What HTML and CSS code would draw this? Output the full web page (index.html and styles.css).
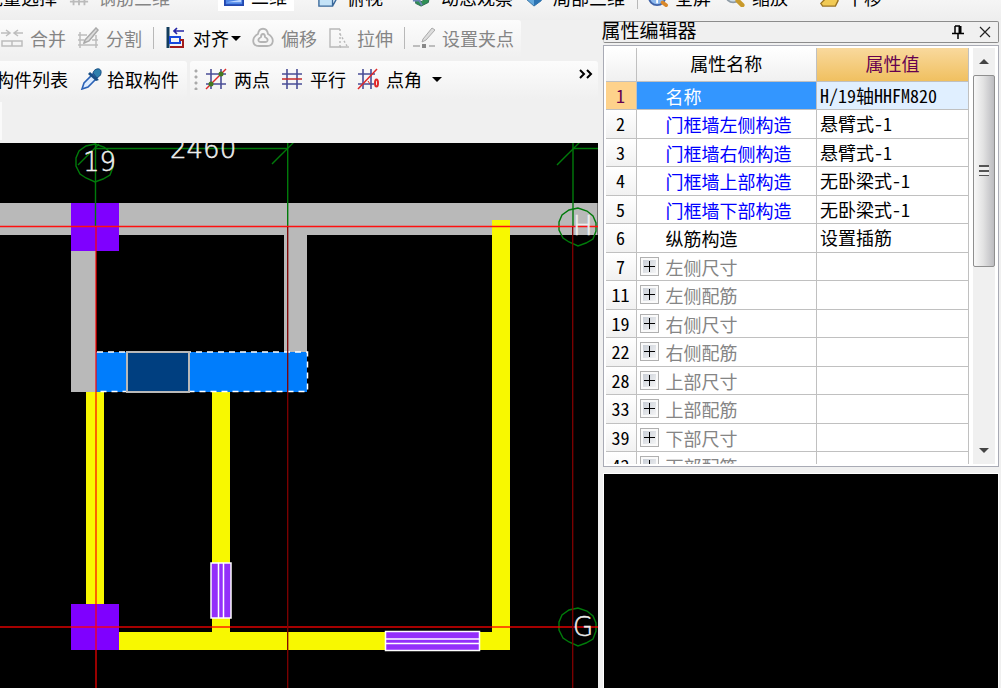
FILE: index.html
```html
<!DOCTYPE html>
<html lang="zh-CN">
<head>
<meta charset="utf-8">
<title>属性编辑器</title>
<link rel="stylesheet" href="styles.css">
</head>
<body>
<div class="app">
  <header class="view-bar" role="toolbar" aria-label="视图">
    <button class="tool cut-left">批量选择</button>
    <button class="tool off"><svg class="icon" viewBox="0 0 22 22"><path d="M1 4h20M1 10h20M1 16h20M5 2v18M11 2v18M17 2v18" stroke="#bbb" stroke-width="2" fill="none"/></svg>钢筋三维</button>
    <button class="tool chosen"><svg class="icon" viewBox="0 0 22 22"><rect x="1" y="1" width="20" height="20" fill="#4f86e6" stroke="#2348b0" stroke-width="2"/><path d="M3 18h16v-3z" fill="#b9d4ff"/></svg>二维</button>
    <button class="tool"><svg class="icon" viewBox="0 0 22 22"><path d="M1 10h15v11H1zM1 10l6-8h14l-5 8M16 21l5-9V2" fill="#c4e3f8" stroke="#39689a" stroke-width="1.5"/></svg>俯视</button>
    <button class="tool"><svg class="icon" viewBox="0 0 22 22"><path d="M4 14l7 2 9-10-2 11-8 4-6-3z" fill="#2f9155" stroke="#24634b"/><path d="M1 15h7l3 5" stroke="#6b83b5" stroke-width="2" fill="none"/></svg>动态观察</button>
    <button class="tool local"><svg class="icon" viewBox="0 0 22 22"><path d="M2 13l9 8 8-6 1-9-9 4-9-4z" fill="#63a8dc" stroke="#2f6c9e"/><path d="M11 10v11l8-6 1-9z" fill="#2c74b3"/></svg>局部三维</button>
    <span class="divider"></span>
    <button class="tool near">
      <svg class="icon" viewBox="0 0 22 22"><circle cx="10" cy="11" r="9" fill="#8db9ee" stroke="#3f62a8" stroke-width="2"/><path d="M10 8v10M5 13h10" stroke="#fff" stroke-width="2"/><path d="M16 17l4 3" stroke="#d9882b" stroke-width="4" stroke-linecap="round"/></svg>全屏</button>
    <button class="tool near zoom"><svg class="icon" viewBox="0 0 22 22"><circle cx="9" cy="9" r="8" fill="#cfdde6" stroke="#8e9ba5" stroke-width="2"/><path d="M14 15l5 5" stroke="#c99a2c" stroke-width="5" stroke-linecap="round"/></svg>缩放</button>
    <button class="tool near"><svg class="icon" viewBox="0 0 22 22"><path d="M2 18l5-5V4l4-2 6 4 4 9-3 6H4z" fill="#f1ca55" stroke="#9b7322" stroke-width="1.5"/></svg>平移</button>
  </header>

  <main class="work">
    <section class="left">
      <div class="bars">
        <div class="bar edit-bar" role="toolbar" aria-label="修改">
          <button class="tool off"><svg class="icon" viewBox="0 0 22 22" fill="none" stroke="#bdbdbd" stroke-width="1.5"><path d="M0 6h8M5 3l4 3-4 3M22 6h-8M17 3l-4 3 4 3M1 14h20v5H1zM11 14v5"/></svg>合并</button>
          <button class="tool off"><svg class="icon" viewBox="0 0 22 22" fill="none" stroke="#bdbdbd" stroke-width="1.5"><path d="M1 8h9M1 18h20M3 5v16M19 8v13M1 13h6M15 13h6M7 16l2-1"/><path d="M8 13L19 1l2 2-9 11-5 2z" fill="#ddd" stroke="#aaa"/></svg>分割</button>
          <span class="divider"></span>
          <button class="tool align"><svg class="icon" viewBox="0 0 22 22" fill="none"><path d="M3 0v21" stroke="#123c5c" stroke-width="3"/><path d="M9 4h10M12 1L9 4l3 3" stroke="#2525a5" stroke-width="1.7"/><path d="M5 10h10v6H5z" stroke="#1748dd" stroke-width="2"/><path d="M5 20h13v-7h-3" stroke="#a11b1b" stroke-width="2"/></svg>对齐<i class="caret"></i></button>
          <button class="tool off"><svg class="icon" viewBox="0 0 22 22" fill="none" stroke="#b4b4b4" stroke-width="1.8"><path d="M6 7C7 0 15 0 16 7c7 4 6 12-1 12H7C0 19-1 11 6 7z"/><path d="M9 10c0-4 4-4 4 0 4 2 3 5 0 5H9c-3 0-4-3 0-5z"/></svg>偏移</button>
          <button class="tool off"><svg class="icon" viewBox="0 0 22 22" fill="none" stroke="#b8b8b8" stroke-width="1.4"><path d="M12 2H2v18h11"/><path d="M12 2v18M12 7l7 12" stroke-dasharray="2 2"/><path d="M12 20h9"/></svg>拉伸</button>
          <span class="divider"></span>
          <button class="tool off snap"><svg class="icon" viewBox="0 0 22 22" fill="none"><path d="M0 19h7M16 19h6" stroke="#aaa" stroke-width="1.5"/><path d="M9 17h4v4H9z" fill="#888"/><path d="M10 12L19 1l3 2-9 10-4 2z" fill="#ddd" stroke="#aaa"/></svg>设置夹点</button>
        </div>
        <div class="bar-row">
          <div class="bar part-bar" role="toolbar" aria-label="构件">
            <button class="tool">构件列表</button>
            <button class="tool"><svg class="icon" viewBox="0 0 22 22"><path d="M2 21l2-6 9-9 4 4-9 9z" fill="#dcecff" stroke="#2b62b6" stroke-width="1.6"/><path d="M10 4l9 8-3 1-8-7z" fill="#174e83"/><path d="M13 5c1-5 9-6 8 0 0 3-3 4-4 5z" fill="#2e80ad" stroke="#174e83"/></svg>拾取构件</button>
          </div>
          <div class="bar point-bar" role="toolbar" aria-label="辅轴">
            <span class="grip"></span>
            <button class="tool"><svg class="icon" viewBox="0 0 22 22" fill="none"><path d="M6 1v20M16 1v20M1 6h20M1 16h20" stroke="#4a4e96" stroke-width="1.6"/><path d="M1 21L21 1" stroke="#e02828" stroke-width="1.5"/><circle cx="16" cy="6" r="2.5" fill="#45791f"/><circle cx="6" cy="16" r="2.5" fill="#45791f"/></svg>两点</button>
            <button class="tool"><svg class="icon" viewBox="0 0 22 22" fill="none"><path d="M6 1v20M16 1v20M1 6h20M1 16h20" stroke="#4a4e96" stroke-width="1.6"/><path d="M1 11h20" stroke="#c42a2a" stroke-width="1.5"/></svg>平行</button>
            <button class="tool"><svg class="icon" viewBox="0 0 22 22" fill="none"><path d="M6 1v20M14 1v20M1 6h17M1 16h16" stroke="#4a4e96" stroke-width="1.6"/><path d="M1 21L20 1" stroke="#e02828" stroke-width="1.5"/><ellipse cx="19.500" cy="15" rx="1.500" ry="3.500" stroke="#e02828" stroke-width="2"/><path d="M11 13l2 3" stroke="#e02828"/></svg>点角<i class="caret far"></i></button>
            <button class="more" aria-label="更多"><svg width="14" height="10" viewBox="0 0 14 10" fill="none" stroke="#000" stroke-width="2"><path d="M1 1l4 4-4 4M8 1l4 4-4 4"/></svg></button>
          </div>
        </div>
        <div class="stub"></div>
      </div>

      <svg class="drawing" role="img" aria-label="平面图">
        <g transform="translate(0 -143)">
          <g fill="#b9b9b9">
            <rect x="0" y="203" width="100%" height="32"/>
            <rect x="71" y="251" width="25" height="141"/>
            <rect x="284" y="235" width="23" height="117"/>
          </g>
          <g fill="#f8f800">
            <rect x="86" y="392" width="18" height="212"/>
            <rect x="212" y="392" width="18" height="242"/>
            <rect x="119" y="632" width="391" height="18"/>
            <rect x="492" y="220" width="18" height="430"/>
          </g>
          <g fill="#7f00ff">
            <rect x="71" y="203" width="48" height="48"/>
            <rect x="71" y="604" width="48" height="46"/>
          </g>
          <rect x="96" y="352" width="211" height="40" fill="#007dfc"/>
          <path d="M97 352h210.500v39.500H97" fill="none" stroke="#fff" stroke-width="1.500" stroke-dasharray="6 5"/>
          <rect x="127" y="352" width="62" height="40" fill="#003f80" stroke="#b9b9b9" stroke-width="2"/>
          <g fill="#932ffa" stroke="#fff" stroke-width="1.500">
            <rect x="211" y="563" width="20" height="55"/>
            <path d="M218.500 563v55M223.500 563v55"/>
            <rect x="385.500" y="631.500" width="94" height="19"/>
            <path d="M385 639h95M385 643.500h95"/>
          </g>
          <g fill="none" stroke="#007a0a" stroke-width="1.400">
            <path d="M95.500 143v84M287.700 143v84M573 143v84M96 148.500h192M573 148.500h400"/>
            <path d="M78 165l21-21M272 164l22-22M557 165l23-23"/>
            <path id="bubble" d="M95 144l-9 2-7 5-3 7v8l4 8 6 4 9 4 8-3 7-4 3-8v-8l-3-7-6-5z"/>
            <use href="#bubble" x="483" y="64"/>
            <use href="#bubble" x="483" y="464"/>
          </g>
          <g fill="none">
            <path d="M0 226.500h2000" stroke="#ff1010" stroke-width="1.500"/>
            <path d="M0 627h2000" stroke="#ff0000" stroke-opacity=".65" stroke-width="2"/>
            <path d="M96 227v2000" stroke="#ff0000" stroke-opacity=".8" stroke-width="1.500"/>
            <path d="M287.700 227v2000M572.700 227v2000" stroke="#800000" stroke-width="1.300"/>
          </g>
          <g class="labels">
            <text x="170" y="158">2460</text>
            <text x="83" y="171">19</text>
            <text x="573" y="235">H</text>
            <text x="573" y="636">G</text>
          </g>
        </g>
      </svg>
    </section>

    <aside class="right">
      <section class="panel">
        <div class="title">
          <h1>属性编辑器</h1>
          <button aria-label="固定"><svg width="12" height="14" viewBox="0 0 12 14" fill="none" stroke="#000"><path d="M3 1v7M3 1h5M0 8.500h12M6 9v5" stroke-width="1.500"/><path d="M8 1v7" stroke-width="3"/></svg></button>
          <button aria-label="关闭"><svg width="12" height="12" viewBox="0 0 12 12" stroke="#222" stroke-width="1.200"><path d="M1 1l10 10M11 1L1 11"/></svg></button>
        </div>
        <div class="frame">
          <div class="rows">
            <table>
              <colgroup><col class="c-num"><col class="c-name"><col class="c-value"></colgroup>
              <thead><tr><th></th><th scope="col">属性名称</th><th scope="col" class="hot">属性值</th></tr></thead>
              <tbody>
                <tr class="current"><th scope="row">1</th><td>名称</td><td>H/19轴HHFM820</td></tr>
                <tr class="key"><th scope="row">2</th><td>门框墙左侧构造</td><td>悬臂式-1</td></tr>
                <tr class="key"><th scope="row">3</th><td>门框墙右侧构造</td><td>悬臂式-1</td></tr>
                <tr class="key"><th scope="row">4</th><td>门框墙上部构造</td><td>无卧梁式-1</td></tr>
                <tr class="key"><th scope="row">5</th><td>门框墙下部构造</td><td>无卧梁式-1</td></tr>
                <tr><th scope="row">6</th><td>纵筋构造</td><td>设置插筋</td></tr>
                <tr class="group"><th scope="row">7</th><td><button class="plus" aria-label="展开左侧尺寸"></button>左侧尺寸</td><td></td></tr>
                <tr class="group"><th scope="row">11</th><td><button class="plus" aria-label="展开左侧配筋"></button>左侧配筋</td><td></td></tr>
                <tr class="group"><th scope="row">19</th><td><button class="plus" aria-label="展开右侧尺寸"></button>右侧尺寸</td><td></td></tr>
                <tr class="group"><th scope="row">22</th><td><button class="plus" aria-label="展开右侧配筋"></button>右侧配筋</td><td></td></tr>
                <tr class="group"><th scope="row">28</th><td><button class="plus" aria-label="展开上部尺寸"></button>上部尺寸</td><td></td></tr>
                <tr class="group"><th scope="row">33</th><td><button class="plus" aria-label="展开上部配筋"></button>上部配筋</td><td></td></tr>
                <tr class="group"><th scope="row">39</th><td><button class="plus" aria-label="展开下部尺寸"></button>下部尺寸</td><td></td></tr>
                <tr class="group"><th scope="row">42</th><td><button class="plus" aria-label="展开下部配筋"></button>下部配筋</td><td></td></tr>
              </tbody>
            </table>
          </div>
          <div class="scroll">
            <button class="up" aria-label="向上滚动"></button>
            <div class="track"><div class="thumb"><i></i></div></div>
            <button class="down" aria-label="向下滚动"></button>
          </div>
        </div>
      </section>
      <div class="preview"></div>
    </aside>
  </main>
</div>
</body>
</html>
```

FILE: styles.css
```css
* { box-sizing: border-box; }
body {
  margin: 0;
  background: #f0f0f0;
  color: #000;
  font: 18px/24px "Noto Sans CJK SC", sans-serif;
}
button {
  margin: 0;
  padding: 0;
  border: 0;
  background: none;
  color: inherit;
  font: inherit;
}
.app {
  display: flex;
  flex-direction: column;
  height: 100vh;
  overflow: hidden;
}

/* toolbars */
.tool {
  display: flex;
  flex: none;
  align-items: center;
  gap: 7px;
  white-space: nowrap;
}
.off { color: #858585; }
.icon {
  display: block;
  flex: none;
  width: 22px;
  height: 22px;
}
.caret {
  margin-left: -4px;
  border: 5px solid transparent;
  border-top-color: #000;
  border-bottom: 0;
}
.caret.far { margin-left: 3px; }
.divider {
  flex: none;
  width: 1px;
  height: 22px;
  background: #b8b8b8;
}
.view-bar {
  display: flex;
  flex: none;
  align-items: flex-end;
  gap: 28px;
  height: 20px;
  padding-bottom: 11px;
  overflow: hidden;
  background: linear-gradient(#f5f5f5, #eee);
}
.view-bar .tool {
  gap: 8px;
  height: 24px;
}
.view-bar .icon { height: 20px; }
.view-bar .cut-left {
  margin-left: -15px;
  margin-right: -17px;
}
.view-bar .chosen {
  gap: 6px;
  height: 26px;
  margin: 0 -5px -2px 20px;
  padding: 0 7px 4px 5px;
  background: #fff;
}
.view-bar .local { margin-left: -18px; }
.view-bar .divider { margin: 0 -19px 0 -16px; }
.view-bar .near { gap: 6px; }
.view-bar .zoom { margin: 0 2px 0 -15px; }

.work {
  display: grid;
  flex: 1;
  grid-template-columns: minmax(0, 3fr) minmax(0, 2fr);
  gap: 5px;
  min-height: 0;
}
.left {
  display: flex;
  flex-direction: column;
  min-width: 0;
  min-height: 0;
}
.bars {
  display: flex;
  flex: none;
  flex-direction: column;
  gap: 3px;
  padding-bottom: 3px;
}
.bar {
  display: flex;
  align-items: center;
  height: 38px;
  padding-bottom: 2px;
  border-radius: 0 3px 3px 0;
  background: linear-gradient(#fcfcfc, #f0f0f0);
}
.edit-bar {
  gap: 11px;
  align-self: flex-start;
  padding-right: 7px;
  padding-left: 1px;
}
.edit-bar .align { gap: 6px; }
.edit-bar .snap { margin-left: -3px; }
.bar-row {
  display: flex;
  gap: 3px;
}
.part-bar {
  gap: 12px;
  margin-left: -4px;
  padding-right: 8px;
}
.part-bar .tool { gap: 5px; }
.point-bar {
  flex: 1;
  gap: 11px;
  padding-right: 5px;
  padding-left: 4px;
  border-radius: 3px;
}
.grip {
  width: 4px;
  height: 22px;
  margin-right: -4px;
  background: radial-gradient(circle, #aaa 1px, transparent 2px) 0 0 / 4px 6px;
}
.more {
  align-self: flex-start;
  height: 22px;
  margin-left: auto;
}
.more svg {
  display: block;
  margin-top: 4px;
}
.stub {
  width: 2px;
  height: 38px;
  background: #fafafa;
}

/* plan drawing */
.drawing {
  display: block;
  flex: 1;
  width: 100%;
  min-height: 0;
  overflow: hidden;
  background: #000;
}
.labels {
  fill: #eee;
  stroke: #eee;
  stroke-width: .5px;
  font: 200 26px "DejaVu Sans", sans-serif;
}

/* property editor */
.right {
  display: grid;
  grid-template-rows: minmax(0, 675fr) minmax(0, 325fr);
  gap: 6px;
  min-height: 0;
  padding: 1px 2px 0 0;
}
.panel {
  display: flex;
  flex-direction: column;
  gap: 2px;
  min-height: 0;
}
.title {
  display: flex;
  flex: none;
  align-items: center;
  gap: 15px;
  height: 22px;
  padding-right: 7px;
  border: 1px solid #8c8c8c;
  border-left-color: #ccc;
  border-radius: 2px;
}
.title h1 {
  flex: 1;
  margin: 0 0 4px -2px;
  font-size: 19px;
  font-weight: 400;
  line-height: 20px;
}
.title svg { display: block; }
.frame {
  display: flex;
  flex: 1;
  gap: 4px;
  min-height: 0;
  padding: 2px 3px 2px 2px;
  border: 1px solid #a9abb5;
  background: #fff;
}
.rows {
  flex: 1;
  min-width: 0;
  overflow: hidden;
}
table {
  width: 100%;
  border-spacing: 0;
  table-layout: fixed;
}
.c-num { width: 31px; }
.c-value { width: 152px; }
th, td {
  height: 28px;
  padding: 0;
  border-right: 1px solid #c0c0c0;
  border-bottom: 1px solid #c0c0c0;
  font-weight: 400;
  line-height: 22px;
  text-align: left;
  white-space: nowrap;
}
tr:nth-child(even) > * { height: 29px; }
thead th {
  height: 34px;
  padding-bottom: 3px;
  background: linear-gradient(#fff, #f0f0f0);
  text-align: center;
}
thead .hot {
  background: linear-gradient(#f9d99d, #f0c060);
  color: #650050;
}
tbody th {
  padding-bottom: 2px;
  background: linear-gradient(#fff, #f1f1f1);
  font-family: "Noto Sans Mono CJK SC", "Liberation Mono", monospace;
  text-align: center;
}
td:nth-child(2) { padding-left: 29px; }
td:nth-child(3) {
  padding: 0 0 2px 3px;
  font-family: "Noto Sans Mono CJK SC", "Noto Sans CJK SC", sans-serif;
}
.current th {
  background: #fed28b;
  color: #650050;
}
.current td { background: #e0efff; }
.current td:nth-child(2) {
  background: #3396ff;
  color: #fff;
}
.key td:nth-child(2) { color: #00f; }
.group td { color: #858585; }
.plus {
  float: left;
  width: 19px;
  height: 19px;
  margin: 1px 0 0 -26px;
  border: 1px solid #b0b0b0;
  box-shadow: inset 0 0 0 2px #fafafa;
  background:
    linear-gradient(#000, #000) center / 11px 1px no-repeat,
    linear-gradient(#000, #000) center / 1px 11px no-repeat,
    linear-gradient(135deg, #c3c9d2, #fafafa);
}
.scroll {
  display: flex;
  flex: none;
  flex-direction: column;
  width: 22px;
  background: #f0f0f0;
}
.scroll button {
  display: flex;
  align-items: center;
  justify-content: center;
  height: 27px;
}
.up::before {
  border: 5px solid transparent;
  border-top: 0;
  border-bottom: 5px solid #444;
  content: "";
}
.down::before {
  border: 5px solid transparent;
  border-top: 5px solid #444;
  border-bottom: 0;
  content: "";
}
.track { flex: 1; }
.thumb {
  display: flex;
  align-items: center;
  justify-content: center;
  height: 53%;
  border: 1px solid #8f8f8f;
  border-radius: 2px;
  background: linear-gradient(90deg, #f8f8f8, #e3e3e3 45%, #bcbcc0);
}
.thumb i {
  width: 10px;
  height: 11px;
  background: repeating-linear-gradient(#555 0 2px, #eee 2px 5px);
}
.preview {
  border: 1px solid #fff;
  border-bottom: 0;
  background: #000;
}
```
